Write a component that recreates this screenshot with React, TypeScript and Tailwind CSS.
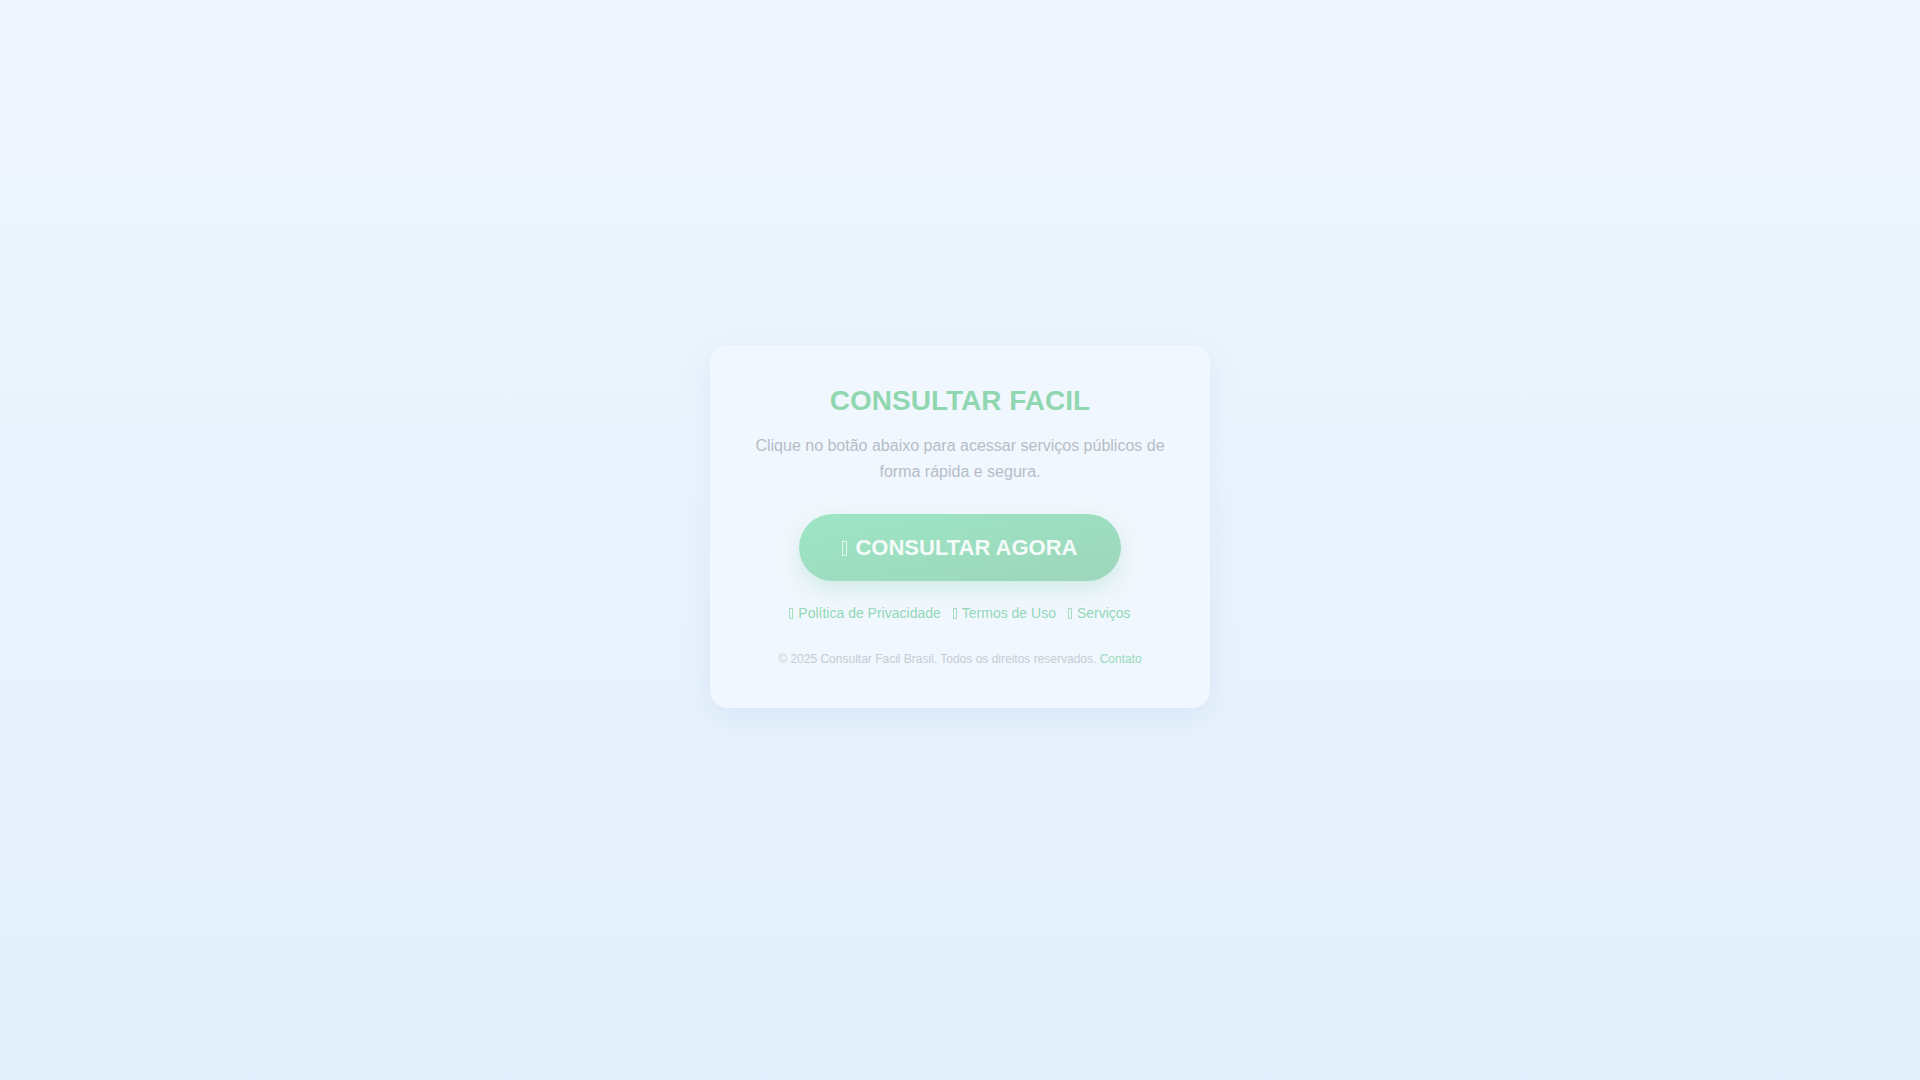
function Tofu({ className }: { className: string }) {
  return <span className={`inline-block border align-[-1px] ${className}`} />
}

export default function App() {
  const links = ['Política de Privacidade', 'Termos de Uso', 'Serviços']

  return (
    <div className="min-h-screen w-full bg-gradient-to-b from-[#eff6fe] to-[#e2effc] flex items-center justify-center pb-[27px] font-['Liberation_Sans',Arial,sans-serif]">
      <div className="w-[500px] rounded-[18px] bg-[#f1f7fe] px-10 pt-10 pb-[42px] text-center shadow-[0_10px_30px_rgba(120,160,200,0.12)]">
        <h1 className="text-[28px] font-bold leading-[32px] text-[#90d7b1]">CONSULTAR FACIL</h1>
        <p className="mt-4 text-[16px] leading-[1.6] text-[#b6bdc6]">
          Clique no botão abaixo para acessar serviços públicos de forma rápida e segura.
        </p>

        <button className="mt-[30px] rounded-full bg-gradient-to-br from-[#9de6c5] to-[#9dd6bb] px-[43px] py-[21px] text-[22px] font-bold leading-[25px] text-[#f4fbf8] shadow-[0_8px_20px_rgba(110,200,160,0.25)]">
          <Tofu className="w-[5px] h-[15px] border-[#e4f6ee] mr-[8px] align-[-1px]" />
          CONSULTAR AGORA
        </button>

        <div className="mt-6 flex justify-center gap-[12px] text-[14px] leading-4 text-[#93d8b6]">
          {links.map((l) => (
            <a key={l} href="#" className="flex items-center gap-[5px]">
              <Tofu className="w-[4px] h-[11px] border-[#a7dfc4]" />
              {l}
            </a>
          ))}
        </div>

        <p className="mt-[31px] text-[12px] leading-[14px] text-[#c5ccd4]">
          © 2025 Consultar Facil Brasil. Todos os direitos reservados.{' '}
          <a href="#" className="text-[#9ad9bb]">Contato</a>
        </p>
      </div>
    </div>
  )
}
